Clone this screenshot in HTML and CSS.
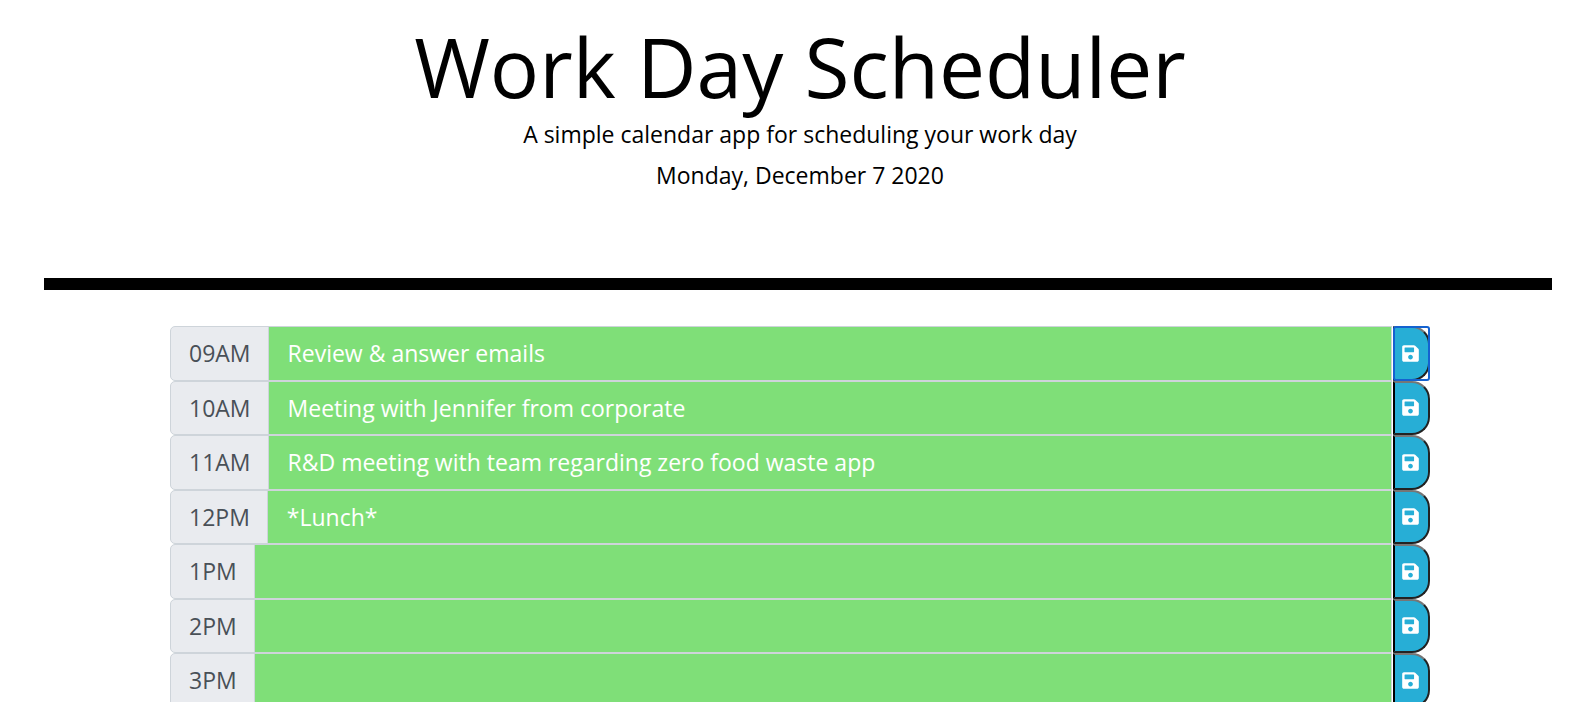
FILE: index.html
```html
<!DOCTYPE html>
<html lang="en">
<head>
<meta charset="utf-8">
<meta name="viewport" content="width=device-width, initial-scale=1">
<title>Work Day Scheduler</title>
<link rel="stylesheet" href="styles.css">
</head>
<body>
<svg class="sprite" aria-hidden="true">
  <symbol id="save" viewBox="0 0 448 512"><path fill="currentColor" d="M433.941 129.941l-83.882-83.882A48 48 0 0 0 316.118 32H48C21.49 32 0 53.49 0 80v352c0 26.51 21.49 48 48 48h352c26.51 0 48-21.49 48-48V163.882a48 48 0 0 0-14.059-33.941zM224 416c-35.346 0-64-28.654-64-64 0-35.346 28.654-64 64-64s64 28.654 64 64c0 35.346-28.654 64-64 64zm96-304.52V212c0 6.627-5.373 12-12 12H76c-6.627 0-12-5.373-12-12V108c0-6.627 5.373-12 12-12h228.52c3.183 0 6.235 1.264 8.485 3.515l3.48 3.48A11.996 11.996 0 0 1 320 111.48z"/></symbol>
</svg>
<header class="header">
  <h1 class="title">Work Day Scheduler</h1>
  <p class="lead">A simple calendar app for scheduling your work day</p>
  <p class="lead">Monday, December 7 2020</p>
</header>
<main class="schedule">
  <div class="row"><label class="hour" for="h9">09AM</label><input class="task" id="h9" type="text" value="Review &amp; answer emails"><button class="save save-active" type="button" aria-label="Save"><svg class="icon"><use href="#save"/></svg></button></div>
  <div class="row"><label class="hour" for="h10">10AM</label><input class="task" id="h10" type="text" value="Meeting with Jennifer from corporate"><button class="save" type="button" aria-label="Save"><svg class="icon"><use href="#save"/></svg></button></div>
  <div class="row"><label class="hour" for="h11">11AM</label><input class="task" id="h11" type="text" value="R&amp;D meeting with team regarding zero food waste app"><button class="save" type="button" aria-label="Save"><svg class="icon"><use href="#save"/></svg></button></div>
  <div class="row"><label class="hour" for="h12">12PM</label><input class="task" id="h12" type="text" value="*Lunch*"><button class="save" type="button" aria-label="Save"><svg class="icon"><use href="#save"/></svg></button></div>
  <div class="row"><label class="hour" for="h13">1PM</label><input class="task" id="h13" type="text"><button class="save" type="button" aria-label="Save"><svg class="icon"><use href="#save"/></svg></button></div>
  <div class="row"><label class="hour" for="h14">2PM</label><input class="task" id="h14" type="text"><button class="save" type="button" aria-label="Save"><svg class="icon"><use href="#save"/></svg></button></div>
  <div class="row"><label class="hour" for="h15">3PM</label><input class="task" id="h15" type="text"><button class="save" type="button" aria-label="Save"><svg class="icon"><use href="#save"/></svg></button></div>
</main>
</body>
</html>
```

FILE: styles.css
```css
* { box-sizing: border-box; }

body {
  display: flex;
  flex-direction: column;
  height: 100vh;
  margin: 0;
  padding: 0 44px 16px;
  background: #fff;
  color: #000;
  font: 23px/1.5 "Open Sans", "Noto Sans", sans-serif;
}

.sprite { display: none; }

.header {
  padding: 16px 0 80px 4px;
  border-bottom: 12px solid #000;
  text-align: center;
}

.title {
  margin: 0;
  font-size: 82px;
  font-weight: 400;
  line-height: 101px;
}

.lead {
  margin: 0 0 6px;
}

/* The list is cut off at the bottom of the window */
.schedule {
  flex: 1;
  min-height: 0;
  overflow: hidden;
  margin-top: 36px;
  padding: 0 122px 0 126px;
}

.row {
  display: flex;
}

.hour {
  padding: 9px 17px 9px 18px;
  border: 1px solid #ced4da;
  border-radius: 5px 0 0 5px;
  background: #e9ebef;
  color: #495057;
}

.task {
  flex: 1;
  min-width: 0;
  margin: 0 1px 0 -1px;
  padding: 9px 19px;
  border: 1px solid #ced4da;
  border-radius: 0;
  background: #7fdf78;
  color: #fff;
  font: inherit;
}

.save {
  position: relative;
  display: flex;
  align-items: center;
  justify-content: center;
  width: 37px;
  padding: 0 2px 0 0;
  border: 2px solid #222;
  border-top-color: #767676;
  border-left-color: #000;
  border-radius: 0 18px 18px 0;
  background: #27aed6;
  color: #fff;
}

/* Focus ring, squarer than the button it surrounds */
.save-active::after {
  content: "";
  position: absolute;
  inset: -2px;
  border: 2px solid #1462d0;
  border-radius: 3px;
}

.icon {
  width: 17px;
  height: 19px;
}
```
